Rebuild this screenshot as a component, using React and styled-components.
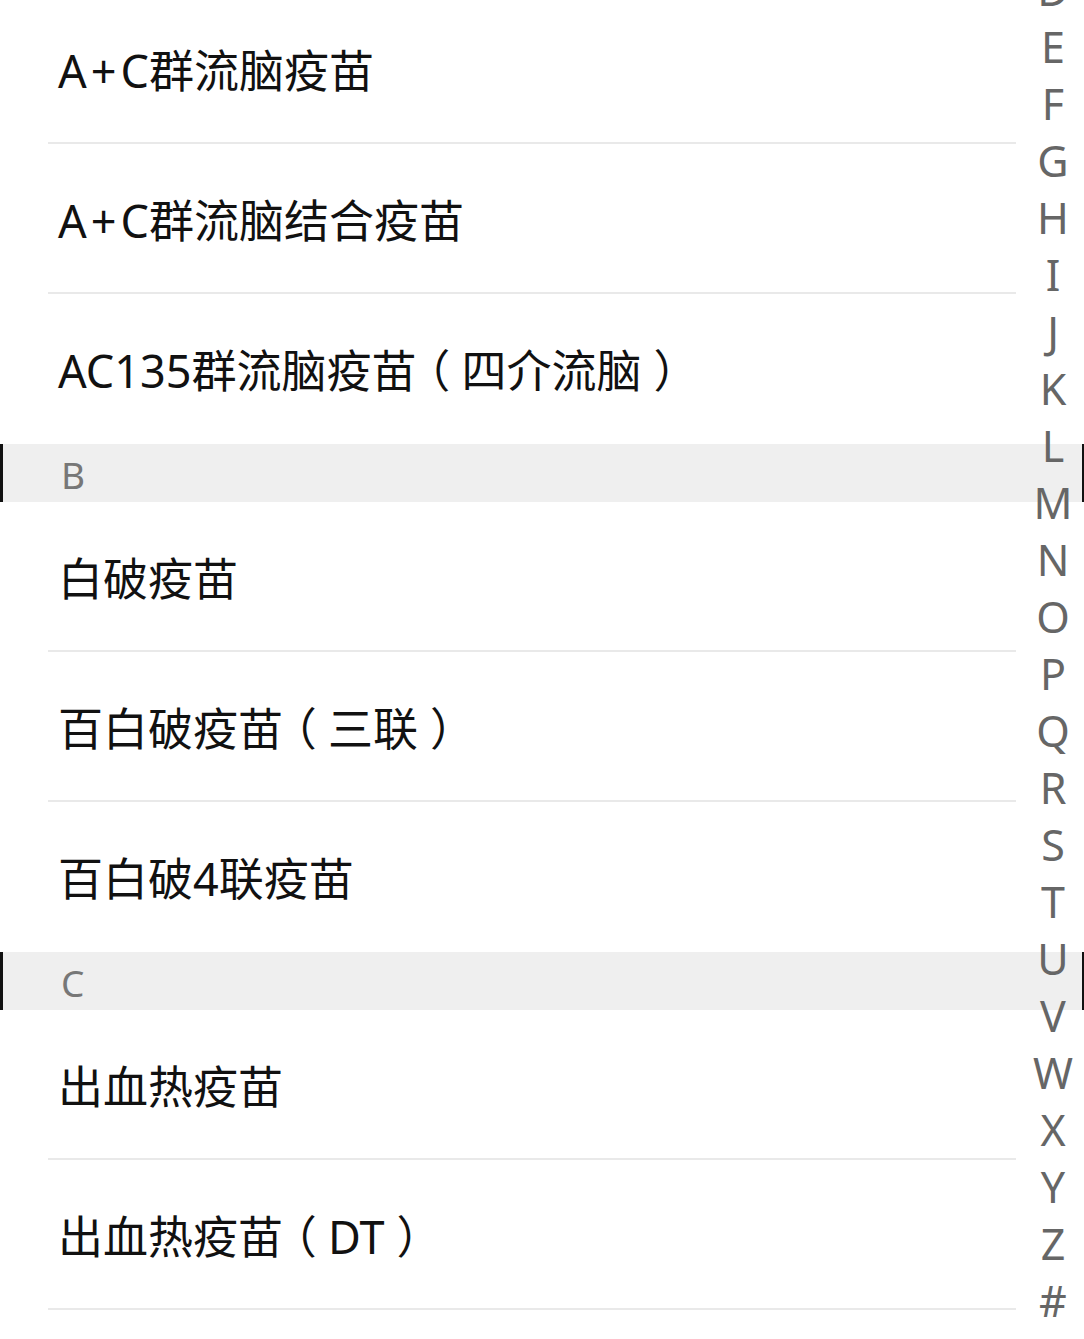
import React from 'react';
import styled, { createGlobalStyle } from 'styled-components';

const GlobalStyle = createGlobalStyle`
  html, body {
    margin: 0;
    padding: 0;
    background: #fff;
    overflow: hidden;
  }
  body {
    font-family: "Noto Sans", "Noto Sans CJK SC", sans-serif;
  }
`

const sections = [
  {
    letter: 'A',
    hidden: true,
    items: ['A+C群流脑疫苗', 'A+C群流脑结合疫苗', 'AC135群流脑疫苗（四介流脑）'],
  },
  {
    letter: 'B',
    items: ['白破疫苗', '百白破疫苗（三联）', '百白破4联疫苗'],
  },
  {
    letter: 'C',
    items: ['出血热疫苗', '出血热疫苗（DT）'],
  },
]

const letters = 'ABCDEFGHIJKLMNOPQRSTUVWXYZ#'.split('')

const Screen = styled.div`
  position: relative;
  width: 1084px;
  height: 1339px;
  overflow: hidden;
  background: #fff;
`

const List = styled.div`
  display: flex;
  flex-direction: column;
  margin-top: -6px;
`

const SectionHeader = styled.div`
  display: flex;
  align-items: center;
  height: 58px;
  box-sizing: border-box;
  padding: 2px 0 0 58px;
  background: #efefef;
  border-left: 3px solid #111;
  border-right: 2px solid #111;
  color: #777;
  font-size: 37px;
`

const Item = styled.div`
  display: flex;
  align-items: center;
  height: 150px;
  box-sizing: border-box;
  margin: 0 68px 0 48px;
  padding: 0 0 0 10px;
  border-bottom: 2px solid ${({ last }) => (last ? 'transparent' : '#e9e9e9')};
  color: #111;
  font-size: 45px;
  white-space: nowrap;
`

// full-width brackets sit centred in their cell in the original font
const Paren = styled.span`
  display: inline-block;
  width: 1em;
  text-align: ${({ open }) => (open ? 'center' : 'left')};
  padding-left: ${({ open }) => (open ? '0' : '12px')};
  box-sizing: border-box;
  font-feature-settings: "halt";
`

const Plus = styled.span`
  margin: 0 4px;
`

const Label = ({ text }) => (
  <span>
    {text.split(/([（）+])/).filter(Boolean).map((part, i) => {
      if (part === '（' || part === '）') {
        return <Paren key={i} open={part === '（'}>{part}</Paren>
      }
      if (part === '+') return <Plus key={i}>+</Plus>
      return <React.Fragment key={i}>{part}</React.Fragment>
    })}
  </span>
)

const IndexBar = styled.div`
  position: absolute;
  top: -210px;
  right: 0;
  width: 62px;
  display: flex;
  flex-direction: column;
  align-items: center;
`

const IndexLetter = styled.span`
  display: block;
  height: 57px;
  line-height: 57px;
  font-size: 43px;
  color: #666;
`

const App = () => (
  <Screen>
    <GlobalStyle />
    <List>
      {sections.map((section) => (
        <React.Fragment key={section.letter}>
          {!section.hidden && <SectionHeader>{section.letter}</SectionHeader>}
          {section.items.map((name, i) => (
            <Item key={name} last={i === section.items.length - 1 && section.letter !== 'C'}>
              <Label text={name} />
            </Item>
          ))}
        </React.Fragment>
      ))}
    </List>
    <IndexBar>
      {letters.map((l) => (
        <IndexLetter key={l}>{l}</IndexLetter>
      ))}
    </IndexBar>
  </Screen>
)

export default App
